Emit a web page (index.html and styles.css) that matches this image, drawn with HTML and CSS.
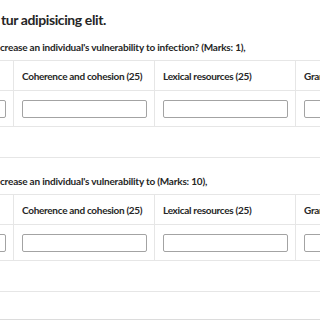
FILE: index.html
```html
<!DOCTYPE html>
<html lang="en">
<head>
    <meta charset="UTF-8">
    <meta name="viewport" content="width=device-width, initial-scale=1.0">
    <title>Writing task marks</title>
    <link rel="stylesheet" href="styles.css">
</head>
<body>

    <div class="page">
        <h2 class="title">tur adipisicing elit.</h2>

        <!-- Question 1 -->
        <div class="question first">
            <p class="q-text">crease an individual's vulnerability to infection? (Marks: 1),</p>
            <table class="marks">
                <thead>
                    <tr>
                        <th>Task achievement (25)</th>
                        <th>Coherence and cohesion (25)</th>
                        <th>Lexical resources (25)</th>
                        <th>Grammatical range (25)</th>
                    </tr>
                </thead>
                <tbody>
                    <tr>
                        <td><input type="text"></td>
                        <td><input type="text"></td>
                        <td><input type="text"></td>
                        <td><input type="text"></td>
                    </tr>
                </tbody>
            </table>
        </div>

        <!-- Question 2 -->
        <div class="question">
            <p class="q-text">crease an individual's vulnerability to (Marks: 10),</p>
            <table class="marks">
                <thead>
                    <tr>
                        <th>Task achievement (25)</th>
                        <th>Coherence and cohesion (25)</th>
                        <th>Lexical resources (25)</th>
                        <th>Grammatical range (25)</th>
                    </tr>
                </thead>
                <tbody>
                    <tr>
                        <td><input type="text"></td>
                        <td><input type="text"></td>
                        <td><input type="text"></td>
                        <td><input type="text"></td>
                    </tr>
                </tbody>
            </table>
        </div>

        <div class="footer-bar"></div>
    </div>

</body>
</html>
```

FILE: styles.css
```css
body {
    margin: 0;
    font-family: Lato, "Open Sans", sans-serif;
    color: #262626;
    background: #fff;
}

.page {
    width: 320px;
    height: 320px;
    overflow: hidden;
}

.title {
    margin: 10px 0 0 1px;
    font-size: 14px;
    line-height: 20px;
    letter-spacing: -0.4px;
    font-weight: bold;
}

/* Bloc de question */
.question {
    padding-top: 16px;
    padding-bottom: 30px;
    border-bottom: 1px solid #e6e6e6;
}

.question.first {
    padding-top: 10px;
}

.q-text {
    margin: 0 0 6px 0;
    font-size: 10px;
    line-height: 14px;
    letter-spacing: -0.2px;
    font-weight: bold;
    white-space: nowrap;
}

/* Tableau des notes */
.marks {
    margin-left: -128px;
    border-collapse: collapse;
    table-layout: fixed;
    width: 564px;
}

.marks th,
.marks td {
    width: 141px;
    border: 1px solid #e6e6e6;
    text-align: left;
    padding: 0 7px 0 8px;
    box-sizing: border-box;
}

.marks th {
    height: 30px;
    font-size: 10px;
    letter-spacing: -0.3px;
    font-weight: bold;
    white-space: nowrap;
    overflow: hidden;
}

.marks td {
    height: 36px;
}

.marks input {
    display: block;
    width: 125px;
    height: 18px;
    box-sizing: border-box;
    margin: 0;
    border: 1px solid #a3a3a3;
    border-radius: 2px;
    background: #fff;
}

.footer-bar {
    margin-top: 27px;
    height: 10px;
    background: #dcdcdc;
}
```
